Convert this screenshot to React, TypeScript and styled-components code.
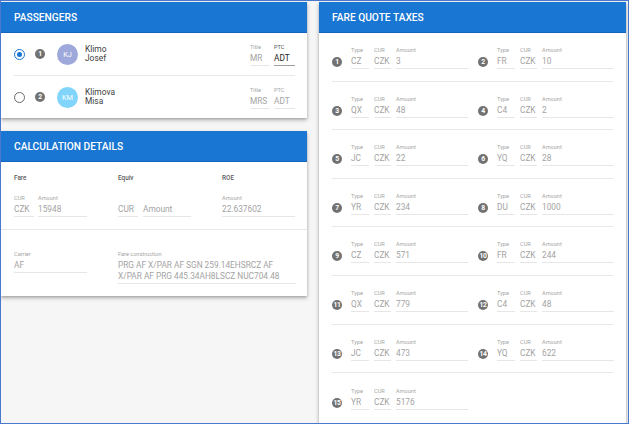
import styled, { createGlobalStyle } from 'styled-components';

const GlobalStyle = createGlobalStyle`
  html, body {
    margin: 0;
    padding: 0;
    background: #ffffff;
  }
  * {
    box-sizing: border-box;
  }
`;

const Frame = styled.div`
  width: 629px;
  height: 424px;
  border: 1px solid #4a78cc;
  background: #f6f6f6;
  padding: 1px 1px 0 0;
  overflow: hidden;
  font-family: Roboto, 'Liberation Sans', sans-serif;
  display: grid;
  grid-template-columns: 306px 307px;
  column-gap: 12px;
  align-items: start;
`;

const LeftColumn = styled.div`
  display: flex;
  flex-direction: column;
  gap: 13px;
`;

const Card = styled.div<{ $tall?: boolean }>`
  background: #ffffff;
  box-shadow: 0 2px 4px rgba(0, 0, 0, 0.28), 0 1px 2px rgba(0, 0, 0, 0.12);
  height: ${(p) => (p.$tall ? '421px' : 'auto')};
  overflow: hidden;
`;

const CardHeader = styled.div`
  height: 31px;
  background: #1976d2;
  color: #ffffff;
  font-size: 10.2px;
  font-weight: 500;
  text-transform: uppercase;
  display: flex;
  align-items: center;
  padding: 0 13px;
  border-bottom: 1px solid #1565c0;
`;

/* ---------- shared form field ---------- */

const Field = styled.div<{ $w: number; $dark?: boolean }>`
  width: ${(p) => p.$w}px;
  flex: none;
  display: flex;
  flex-direction: column;
  border-bottom: 1px solid ${(p) => (p.$dark ? '#9e9e9e' : '#e6e6e6')};
`;

const FieldLabel = styled.div<{ $dark?: boolean }>`
  font-size: 5.6px;
  line-height: 9px;
  height: 9px;
  color: ${(p) => (p.$dark ? '#555555' : '#a6a6a6')};
`;

const FieldValue = styled.div<{ $dark?: boolean }>`
  font-size: 8.3px;
  line-height: 13px;
  color: ${(p) => (p.$dark ? '#222222' : '#a3a3a3')};
  white-space: nowrap;
`;

const MultiValue = styled.div`
  font-size: 8.3px;
  line-height: 11px;
  color: #a3a3a3;
  padding: 1px 0 1px;
`;

/* ---------- passengers ---------- */

const PassengerList = styled.div`
  padding: 0 12px 0 13px;
`;

const PassengerRow = styled.div<{ $last?: boolean }>`
  height: ${(p) => (p.$last ? '42px' : '43px')};
  display: flex;
  align-items: center;
  border-bottom: ${(p) => (p.$last ? 'none' : '1px solid #e8e8e8')};
`;

const Radio = styled.div<{ $checked?: boolean }>`
  width: 11px;
  height: 11px;
  border-radius: 50%;
  border: 1.3px solid ${(p) => (p.$checked ? '#1976d2' : '#6b6b6b')};
  display: flex;
  align-items: center;
  justify-content: center;
  flex: none;

  &::after {
    content: '';
    width: 5px;
    height: 5px;
    border-radius: 50%;
    background: ${(p) => (p.$checked ? '#1976d2' : 'transparent')};
  }
`;

const Badge = styled.div<{ $gap?: number }>`
  width: 10px;
  height: 10px;
  border-radius: 50%;
  background: #727272;
  color: #ffffff;
  font-size: 6.8px;
  font-weight: 700;
  display: flex;
  align-items: center;
  justify-content: center;
  flex: none;
  margin-left: ${(p) => p.$gap ?? 0}px;
  letter-spacing: -0.4px;
`;

const Avatar = styled.div<{ $color: string }>`
  width: 21px;
  height: 21px;
  border-radius: 50%;
  background: ${(p) => p.$color};
  color: #ffffff;
  font-size: 7.4px;
  display: flex;
  align-items: center;
  justify-content: center;
  margin-left: 12px;
  flex: none;
`;

const Name = styled.div`
  margin-left: 7px;
  font-size: 8.4px;
  line-height: 9.5px;
  color: #404040;
  font-weight: 400;
  flex: 1;
`;

const FieldPair = styled.div<{ $gap: number }>`
  display: flex;
  gap: ${(p) => p.$gap}px;
`;

/* ---------- calculation ---------- */

const CalcSection = styled.div<{ $top: number; $divider?: boolean }>`
  padding: ${(p) => p.$top}px 12px 12px 13px;
  border-top: ${(p) => (p.$divider ? '1px solid #e8e8e8' : 'none')};
  display: grid;
  grid-template-columns: 94px 94px 1fr;
  column-gap: 10px;
`;

const Group = styled.div<{ $span?: number }>`
  grid-column: span ${(p) => p.$span ?? 1};
  display: flex;
  flex-direction: column;
`;

const GroupTitle = styled.div`
  font-size: 6.4px;
  line-height: 9px;
  font-weight: 500;
  color: #5c5c5c;
  margin-bottom: 11px;
`;

/* ---------- taxes ---------- */

const TaxGrid = styled.div`
  padding: 0 13px;
`;

const TaxRow = styled.div<{ $last?: boolean }>`
  display: grid;
  grid-template-columns: 135px 135px;
  column-gap: 11px;
  padding: 13px 0 12px;
  height: 48.6px;
  border-bottom: ${(p) => (p.$last ? 'none' : '1px solid #e8e8e8')};
`;

const TaxItem = styled.div`
  display: flex;
  align-items: flex-end;
`;

const TaxBadgeSlot = styled.div`
  width: 19px;
  flex: none;
  padding-bottom: 2px;
`;

type Tax = { type: string; amount: string };

const taxes: Tax[] = [
  { type: 'CZ', amount: '3' },
  { type: 'FR', amount: '10' },
  { type: 'QX', amount: '48' },
  { type: 'C4', amount: '2' },
  { type: 'JC', amount: '22' },
  { type: 'YQ', amount: '28' },
  { type: 'YR', amount: '234' },
  { type: 'DU', amount: '1000' },
  { type: 'CZ', amount: '571' },
  { type: 'FR', amount: '244' },
  { type: 'QX', amount: '779' },
  { type: 'C4', amount: '48' },
  { type: 'JC', amount: '473' },
  { type: 'YQ', amount: '622' },
  { type: 'YR', amount: '5176' },
];

const TaxEntry = ({ n, tax }: { n: number; tax: Tax }) => (
  <TaxItem>
    <TaxBadgeSlot>
      <Badge>{n}</Badge>
    </TaxBadgeSlot>
    <FieldPair $gap={5}>
      <Field $w={18}>
        <FieldLabel>Type</FieldLabel>
        <FieldValue>{tax.type}</FieldValue>
      </Field>
      <Field $w={17}>
        <FieldLabel>CUR</FieldLabel>
        <FieldValue>CZK</FieldValue>
      </Field>
      <Field $w={72}>
        <FieldLabel>Amount</FieldLabel>
        <FieldValue>{tax.amount}</FieldValue>
      </Field>
    </FieldPair>
  </TaxItem>
);

const passengers = [
  { last: 'Klimo', first: 'Josef', initials: 'KJ', color: '#9fa8da', title: 'MR', checked: true },
  { last: 'Klimova', first: 'Misa', initials: 'KM', color: '#81d4fa', title: 'MRS', checked: false },
];

export default function App() {
  const rows: Tax[][] = [];
  for (let i = 0; i < taxes.length; i += 2) rows.push(taxes.slice(i, i + 2));

  return (
    <>
      <GlobalStyle />
      <Frame>
        <LeftColumn>
          <Card>
            <CardHeader>Passengers</CardHeader>
            <PassengerList>
              {passengers.map((p, i) => (
                <PassengerRow key={p.initials} $last={i === passengers.length - 1}>
                  <Radio $checked={p.checked} />
                  <Badge $gap={10}>{i + 1}</Badge>
                  <Avatar $color={p.color}>{p.initials}</Avatar>
                  <Name>
                    {p.last}
                    <br />
                    {p.first}
                  </Name>
                  <FieldPair $gap={4}>
                    <Field $w={20}>
                      <FieldLabel>Title</FieldLabel>
                      <FieldValue>{p.title}</FieldValue>
                    </Field>
                    <Field $w={21} $dark={p.checked}>
                      <FieldLabel $dark={p.checked}>PTC</FieldLabel>
                      <FieldValue $dark={p.checked}>ADT</FieldValue>
                    </Field>
                  </FieldPair>
                </PassengerRow>
              ))}
            </PassengerList>
          </Card>

          <Card>
            <CardHeader>Calculation details</CardHeader>
            <CalcSection $top={12}>
              <Group>
                <GroupTitle>Fare</GroupTitle>
                <FieldPair $gap={4}>
                  <Field $w={20}>
                    <FieldLabel>CUR</FieldLabel>
                    <FieldValue>CZK</FieldValue>
                  </Field>
                  <Field $w={49}>
                    <FieldLabel>Amount</FieldLabel>
                    <FieldValue>15948</FieldValue>
                  </Field>
                </FieldPair>
              </Group>
              <Group>
                <GroupTitle>Equiv</GroupTitle>
                <FieldPair $gap={5}>
                  <Field $w={20}>
                    <FieldLabel />
                    <FieldValue>CUR</FieldValue>
                  </Field>
                  <Field $w={48}>
                    <FieldLabel />
                    <FieldValue>Amount</FieldValue>
                  </Field>
                </FieldPair>
              </Group>
              <Group>
                <GroupTitle>ROE</GroupTitle>
                <Field $w={73}>
                  <FieldLabel>Amount</FieldLabel>
                  <FieldValue>22.637602</FieldValue>
                </Field>
              </Group>
            </CalcSection>
            <CalcSection $top={20} $divider>
              <Group>
                <Field $w={73}>
                  <FieldLabel>Carrier</FieldLabel>
                  <FieldValue>AF</FieldValue>
                </Field>
              </Group>
              <Group $span={2}>
                <Field $w={178}>
                  <FieldLabel>Fare construction</FieldLabel>
                  <MultiValue>
                    PRG AF X/PAR AF SGN 259.14EHSRCZ AF
                    <br />
                    X/PAR AF PRG 445.34AH8LSCZ NUC704.48
                  </MultiValue>
                </Field>
              </Group>
            </CalcSection>
          </Card>
        </LeftColumn>

        <Card $tall>
          <CardHeader>Fare quote taxes</CardHeader>
          <TaxGrid>
            {rows.map((row, r) => (
              <TaxRow key={r} $last={r === rows.length - 1}>
                {row.map((t, c) => (
                  <TaxEntry key={c} n={r * 2 + c + 1} tax={t} />
                ))}
              </TaxRow>
            ))}
          </TaxGrid>
        </Card>
      </Frame>
    </>
  );
}
